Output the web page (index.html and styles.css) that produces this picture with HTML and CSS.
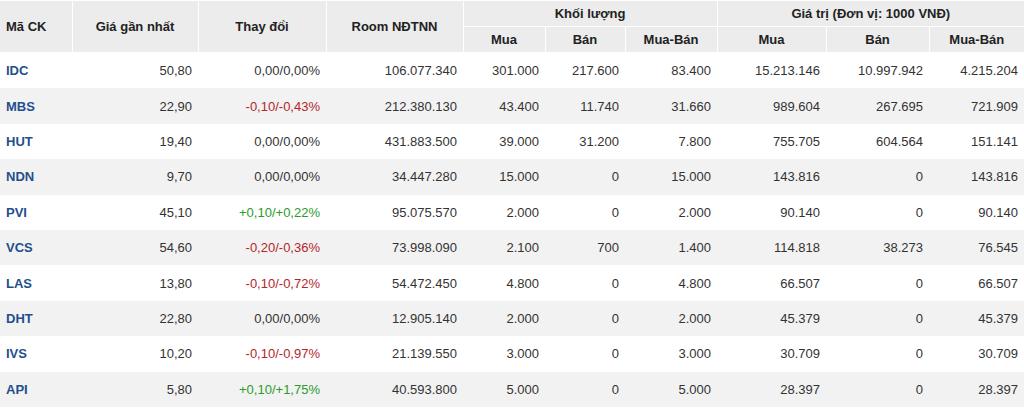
FILE: index.html
```html
<!DOCTYPE html>
<html lang="vi">
<head>
<meta charset="utf-8">
<title>Giao dịch NĐTNN</title>
<link rel="stylesheet" href="styles.css">
</head>
<body>
<table class="grid">
  <colgroup>
    <col class="c1"><col class="c2"><col class="c3"><col class="c4">
    <col class="c5"><col class="c6"><col class="c7">
    <col class="c8"><col class="c9"><col class="c10">
  </colgroup>
  <thead>
    <tr class="h1">
      <th rowspan="2" class="left">Mã CK</th>
      <th rowspan="2">Giá gần nhất</th>
      <th rowspan="2">Thay đổi</th>
      <th rowspan="2">Room NĐTNN</th>
      <th colspan="3">Khối lượng</th>
      <th colspan="3">Giá trị (Đơn vị: 1000 VNĐ)</th>
    </tr>
    <tr class="h2">
      <th>Mua</th><th>Bán</th><th>Mua-Bán</th>
      <th>Mua</th><th>Bán</th><th>Mua-Bán</th>
    </tr>
  </thead>
  <tbody>
    <tr><td class="tk">IDC</td><td>50,80</td><td>0,00/0,00%</td><td>106.077.340</td><td>301.000</td><td>217.600</td><td>83.400</td><td>15.213.146</td><td>10.997.942</td><td>4.215.204</td></tr>
    <tr><td class="tk">MBS</td><td>22,90</td><td class="dn">-0,10/-0,43%</td><td>212.380.130</td><td>43.400</td><td>11.740</td><td>31.660</td><td>989.604</td><td>267.695</td><td>721.909</td></tr>
    <tr><td class="tk">HUT</td><td>19,40</td><td>0,00/0,00%</td><td>431.883.500</td><td>39.000</td><td>31.200</td><td>7.800</td><td>755.705</td><td>604.564</td><td>151.141</td></tr>
    <tr><td class="tk">NDN</td><td>9,70</td><td>0,00/0,00%</td><td>34.447.280</td><td>15.000</td><td>0</td><td>15.000</td><td>143.816</td><td>0</td><td>143.816</td></tr>
    <tr><td class="tk">PVI</td><td>45,10</td><td class="up">+0,10/+0,22%</td><td>95.075.570</td><td>2.000</td><td>0</td><td>2.000</td><td>90.140</td><td>0</td><td>90.140</td></tr>
    <tr><td class="tk">VCS</td><td>54,60</td><td class="dn">-0,20/-0,36%</td><td>73.998.090</td><td>2.100</td><td>700</td><td>1.400</td><td>114.818</td><td>38.273</td><td>76.545</td></tr>
    <tr><td class="tk">LAS</td><td>13,80</td><td class="dn">-0,10/-0,72%</td><td>54.472.450</td><td>4.800</td><td>0</td><td>4.800</td><td>66.507</td><td>0</td><td>66.507</td></tr>
    <tr><td class="tk">DHT</td><td>22,80</td><td>0,00/0,00%</td><td>12.905.140</td><td>2.000</td><td>0</td><td>2.000</td><td>45.379</td><td>0</td><td>45.379</td></tr>
    <tr><td class="tk">IVS</td><td>10,20</td><td class="dn">-0,10/-0,97%</td><td>21.139.550</td><td>3.000</td><td>0</td><td>3.000</td><td>30.709</td><td>0</td><td>30.709</td></tr>
    <tr><td class="tk">API</td><td>5,80</td><td class="up">+0,10/+1,75%</td><td>40.593.800</td><td>5.000</td><td>0</td><td>5.000</td><td>28.397</td><td>0</td><td>28.397</td></tr>
  </tbody>
</table>
</body>
</html>
```
FILE: styles.css
```css
html, body {
  margin: 0;
  padding: 0;
  background: #ffffff;
}
body {
  font-family: "Liberation Sans", Arial, sans-serif;
  font-size: 13px;
  color: #333333;
}
.grid {
  width: 1024px;
  border-collapse: collapse;
  table-layout: fixed;
}
.c1 { width: 72px; }
.c2 { width: 126px; }
.c3 { width: 128px; }
.c4 { width: 137px; }
.c5 { width: 82px; }
.c6 { width: 80px; }
.c7 { width: 92px; }
.c8 { width: 109px; }
.c9 { width: 103px; }
.c10 { width: 95px; }

.grid th {
  background: #ececec;
  border: 1px solid #ffffff;
  font-weight: bold;
  color: #222222;
  text-align: center;
  padding: 0 6px;
  white-space: nowrap;
}
.grid th:first-child { border-left: 0; }
.grid th:last-child { border-right: 0; }
.h1 th { height: 25px; }
.h2 th { height: 25px; }
.grid th.left { text-align: left; }

.grid td {
  height: 35.4px;
  padding: 0 6px;
  text-align: right;
  white-space: nowrap;
  border: 0;
}
.grid tbody tr:nth-child(even) td { background: #f2f2f2; }
.grid td.tk {
  text-align: left;
  font-weight: bold;
  color: #1f4f8d;
}
.grid td.dn { color: #b3262a; }
.grid td.up { color: #2c9b2c; }
```
